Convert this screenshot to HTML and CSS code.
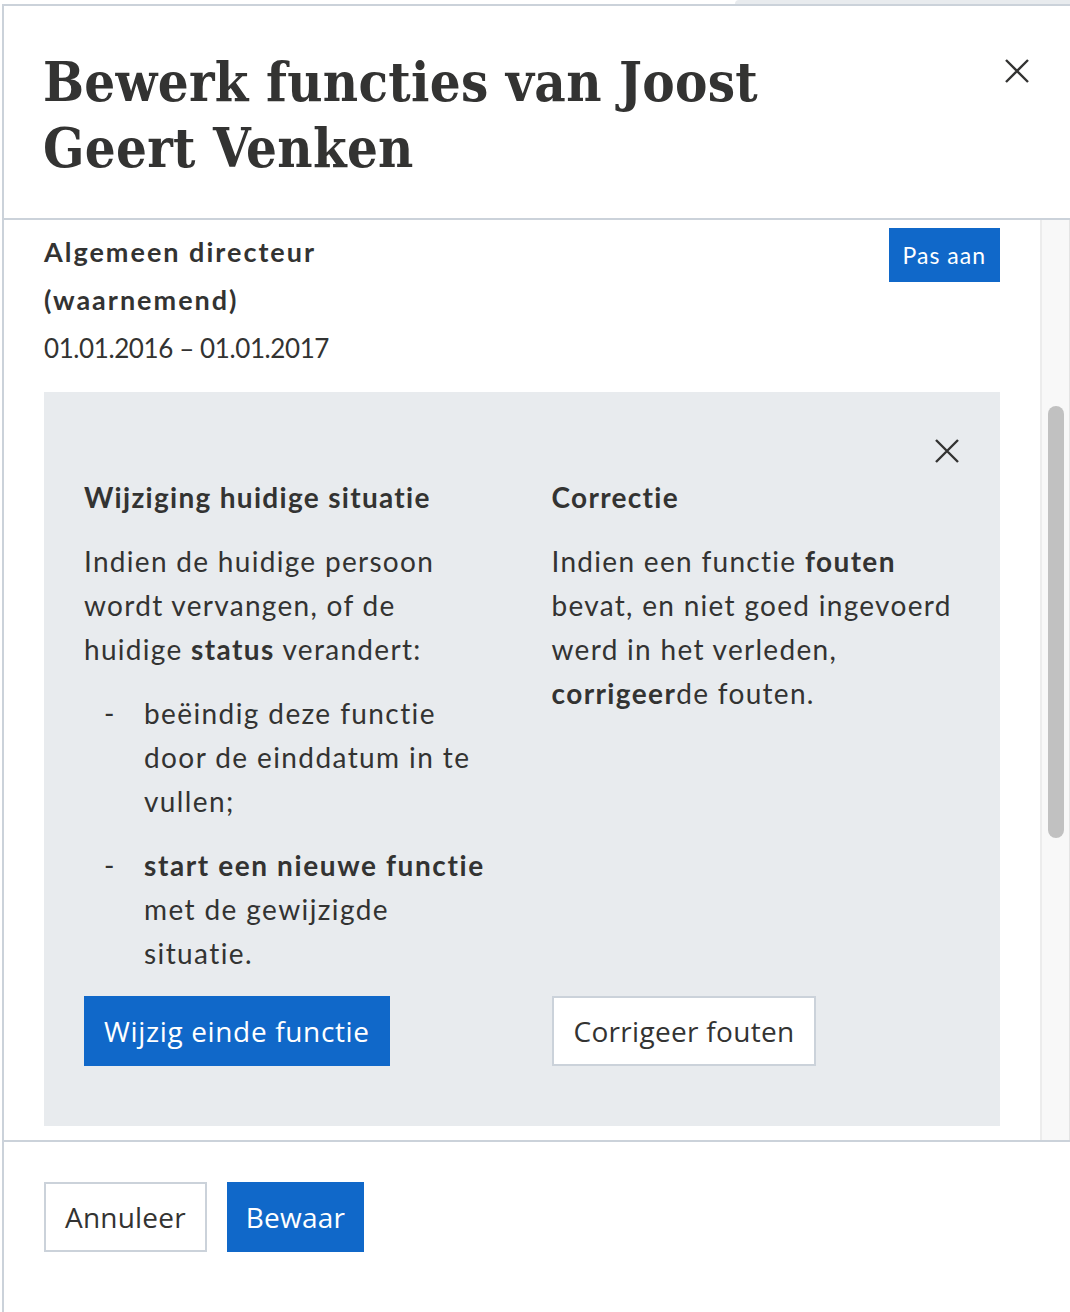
FILE: index.html
```html
<!DOCTYPE html>
<html lang="nl">
<head>
<meta charset="utf-8">
<title>Bewerk functies</title>
<link rel="stylesheet" href="styles.css">
</head>
<body>
<div class="topstrip"><div class="behind"></div></div>
<div class="modal">
  <header class="modal-header">
    <h1 class="title">Bewerk functies van Joost<br>Geert Venken</h1>
    <button class="icon-btn header-close" aria-label="Sluit">
      <svg width="26" height="26" viewBox="0 0 26 26"><path d="M2 2 L24 24 M24 2 L2 24" stroke="#333332" stroke-width="2.4" fill="none"/></svg>
    </button>
  </header>
  <div class="modal-body">
    <div class="body-content">
      <div class="function-row">
        <div class="function-info">
          <div class="function-name">Algemeen directeur<br>(waarnemend)</div>
          <div class="function-dates">01.01.2016 – 01.01.2017</div>
        </div>
        <button class="btn btn-primary btn-small">Pas aan</button>
      </div>
      <section class="choice-box">
        <div class="choice-top">
          <button class="icon-btn" aria-label="Sluit">
            <svg width="24" height="24" viewBox="0 0 24 24"><path d="M1 1 L23 23 M23 1 L1 23" stroke="#333332" stroke-width="2.4" fill="none"/></svg>
          </button>
        </div>
        <div class="choice-cols">
          <div class="choice-col">
            <h2 class="choice-title">Wijziging huidige situatie</h2>
            <p class="choice-text">Indien de huidige persoon<br>wordt vervangen, of de<br>huidige <strong>status</strong> verandert:</p>
            <ul class="dash-list">
              <li><span>beëindig deze functie<br>door de einddatum in te<br>vullen;</span></li>
              <li><span><strong>start een nieuwe functie</strong><br>met de gewijzigde<br>situatie.</span></li>
            </ul>
            <div class="choice-actions"><button class="btn btn-primary">Wijzig einde functie</button></div>
          </div>
          <div class="choice-col">
            <h2 class="choice-title">Correctie</h2>
            <p class="choice-text">Indien een functie <strong>fouten</strong><br>bevat, en niet goed ingevoerd<br>werd in het verleden,<br><strong>corrigeer</strong>de fouten.</p>
            <div class="choice-actions"><button class="btn btn-secondary">Corrigeer fouten</button></div>
          </div>
        </div>
      </section>
    </div>
    <div class="scrollbar"><div class="thumb"></div></div>
  </div>
  <footer class="modal-footer">
    <button class="btn btn-secondary btn-footer">Annuleer</button>
    <button class="btn btn-primary btn-footer">Bewaar</button>
  </footer>
</div>
</body>
</html>
```
FILE: styles.css
```css
* { box-sizing: border-box; }
html, body { margin: 0; padding: 0; background: #fff; }
body {
  font-family: Lato, "Noto Sans", sans-serif;
  color: #333332;
  width: 1070px;
  height: 1312px;
  overflow: hidden;
}
.topstrip { height: 4px; display: flex; }
.behind { margin-left: 735px; flex: 1; background: #e8ebee; border-top-left-radius: 4px; }
.modal {
  margin-left: 2px;
  border-top: 2px solid #cbd2da;
  border-left: 2px solid #cbd2da;
  height: 1308px;
  display: flex;
  flex-direction: column;
}
.modal-header {
  display: flex;
  justify-content: space-between;
  align-items: flex-start;
  padding: 43px 40px 37px 39px;
  border-bottom: 2px solid #cbd2da;
}
.title {
  margin: 0;
  font-family: "DejaVu Serif", serif;
  font-stretch: condensed;
  font-weight: bold;
  font-size: 54px;
  line-height: 66px;
  letter-spacing: 0.3px;
  white-space: nowrap;
  color: #333332;
}
.icon-btn { background: none; border: 0; padding: 0; margin: 0; cursor: pointer; display: block; }
.icon-btn svg { display: block; }
.header-close { margin-top: 9px; }
.modal-body { display: flex; height: 920px; overflow: hidden; }
.body-content { flex: 1; padding: 8px 40px 0 40px; overflow: hidden; }
.scrollbar {
  width: 30px;
  background: #f8f8f8;
  border-left: 2px solid #ececec;
  border-right: 1px solid #e4e4e4;
  padding: 186px 0 0 6px;
}
.thumb { width: 16px; height: 432px; background: #c1c1c1; border-radius: 8px; }
.function-row { display: flex; justify-content: space-between; align-items: flex-start; }
.function-name { font-weight: bold; font-size: 27px; line-height: 48px; letter-spacing: 2px; }
.function-dates { font-size: 26px; line-height: 48px; letter-spacing: -0.4px; }
.btn {
  font-family: "Open Sans", sans-serif;
  font-size: 28px;
  letter-spacing: 0.65px;
  height: 70px;
  padding: 0 20px;
  border: 0;
  cursor: pointer;
  white-space: nowrap;
}
.btn-primary { background: #1068c9; color: #fff; }
.btn-secondary { background: #fff; color: #333332; border: 2px solid #cbd2da; padding: 0 20px; letter-spacing: 0.3px; }
.btn-small { font-family: Lato, sans-serif; font-size: 23px; letter-spacing: 1px; height: 54px; padding: 0 14px; }
.btn-footer { letter-spacing: 0.2px; padding: 0 19px; }
.choice-box {
  margin-top: 20px;
  background: #e8ebee;
  padding: 47px 41px 60px 40px;
}
.choice-top { display: flex; justify-content: flex-end; }
.choice-cols { display: grid; grid-template-columns: 1fr 1fr; column-gap: 60px; margin-top: 14px; }
.choice-col { display: flex; flex-direction: column; }
.choice-title { margin: 0; font-size: 28px; line-height: 40px; font-weight: bold; letter-spacing: 1.3px; }
.choice-text { margin: 22px 0 0; font-size: 28px; line-height: 44px; letter-spacing: 1.3px; white-space: nowrap; }
.choice-text strong { letter-spacing: 1.4px; }
.dash-list { list-style: none; margin: 20px 0 0; padding: 0; }
.dash-list li { display: flex; font-size: 28px; line-height: 44px; margin-bottom: 20px; letter-spacing: 1.4px; white-space: nowrap; }
.dash-list li strong { letter-spacing: 1.6px; }
.dash-list li:last-child { margin-bottom: 0; }
.dash-list li::before { content: "-"; width: 40px; margin-left: 20px; flex: none; }
.choice-actions { margin-top: auto; padding-top: 21px; }
.modal-footer {
  border-top: 2px solid #cbd2da;
  padding: 40px 40px;
  display: flex;
  gap: 20px;
  flex: 1;
  align-items: flex-start;
}
```
